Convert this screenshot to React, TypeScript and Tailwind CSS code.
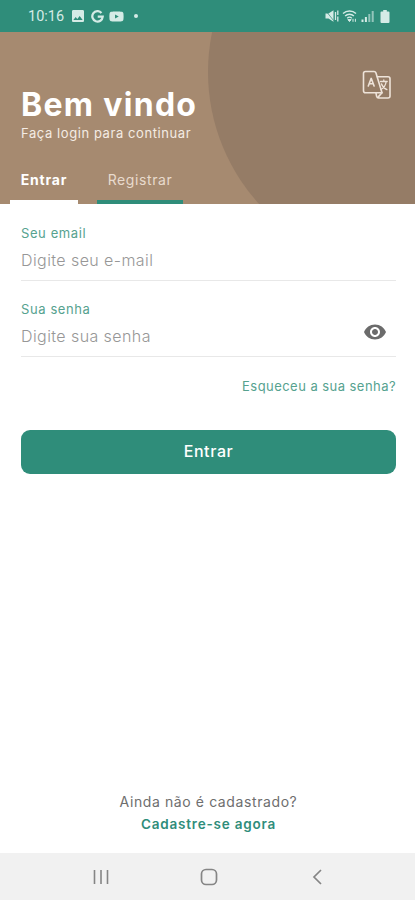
import React, { useState } from 'react';
import { MdImage, MdVisibility } from 'react-icons/md';
import { FaYoutube } from 'react-icons/fa';

const TABS = [
  { id: 'login', label: 'Entrar' },
  { id: 'register', label: 'Registrar' },
];

const StatusBar: React.FC = () => (
  <div className="flex h-8 shrink-0 items-center justify-between bg-[#2f8d7a] pl-7 pr-[25px] text-[#d5ebe6]">
    <div className="flex items-center">
      <span className="w-[42px] whitespace-nowrap pt-[2px] font-['Roboto',sans-serif] text-[14.5px] leading-none">10:16</span>
      <MdImage className="h-4 w-4" />
      <svg viewBox="0 0 24 24" className="ml-[5px] h-[13px] w-[13px]" fill="none" stroke="currentColor" strokeWidth="4.2">
        <path d="M19.3 5.4A9.6 9.6 0 1 0 21.6 12.4H12.4" />
      </svg>
      <FaYoutube className="ml-[5px] h-[15px] w-[15px]" />
      <span className="ml-[10px] h-1 w-1 rounded-full bg-[#d5ebe6]" />
    </div>
    <div className="flex items-center">
      {/* muted speaker with vibration bars */}
      <svg viewBox="0 0 14 14" className="h-[14px] w-[14px]" fill="currentColor">
        <path d="M0.5 4.5h3L8.5 1.2v11.6L3.5 9.5h-3z" />
        <path d="M0.8 1.8l8 10" stroke="#2f8d7a" strokeWidth="0.7" />
        <path d="M10.5 3v8M12.8 1.5v4.5M12.8 7.5v5" fill="none" stroke="currentColor" strokeWidth="1.3" />
      </svg>
      <svg viewBox="0 0 15 14" className="ml-[3px] h-[14px] w-[15px]" fill="none" stroke="currentColor" strokeWidth="1.4">
        <path d="M1 4.6C4.6 1.2 10.4 1.2 14 4.6M3.1 7C5.6 4.6 9.4 4.6 11.9 7M5.2 9.2C6.6 7.9 8.4 7.9 9.8 9.2" />
        <path d="M7.5 12.6L5.9 10.6h3.2zM11 9.8v3M13.4 9.8v3" fill="currentColor" strokeWidth="1" />
      </svg>
      <svg viewBox="0 0 13 13" className="ml-[4px] h-[13px] w-[13px]" fill="currentColor">
        <path d="M0.5 9.5h2V12h-2zM3.9 7h2v5h-2z" />
        <path d="M7.3 4h2v8h-2zM10.7 1h2v11h-2z" opacity="0.6" />
      </svg>
      <svg viewBox="0 0 10 13" className="ml-[6px] h-[13px] w-[10px]" fill="currentColor">
        <path d="M3.2 0h3.6v1.5h1.7q1 0 1 1V12q0 1-1 1h-7q-1 0-1-1V2.5q0-1 1-1h1.7z" />
      </svg>
    </div>
  </div>
);

const TranslateIcon: React.FC<{ className?: string }> = ({ className }) => (
  <svg viewBox="0 0 30 30" className={className} fill="none" stroke="currentColor" strokeWidth="1.6" strokeLinejoin="round" strokeLinecap="round">
    <path d="M3.5 1.5h8.6q1.3 0 1.8 1.3L20 22.8H3.5q-2 0-2-2V3.5q0-2 2-2z" />
    <path d="M15.3 6.8H26q2 0 2 2V26q0 2-2 2H16.6q-1.6 0-2-1.6L14 23M20 22.8L15.6 27.6" />
    <path d="M6.3 16l2.9-7.6L12.1 16M7.3 13.7h3.8" />
    <path d="M18.5 11.5h6.7M21.8 10v1.5M24.2 11.5c-.6 4-2.6 6.7-5.2 8M19.4 13.8c1 2.8 2.9 4.8 5.5 5.9" strokeWidth="1.3" />
  </svg>
);

interface FieldProps {
  label: string;
  placeholder: string;
  type: string;
  children?: React.ReactNode;
}

const Field: React.FC<FieldProps> = ({ label, placeholder, type, children }) => (
  <label className="flex h-[76px] flex-col border-b border-[#e8e8e8] pt-5">
    <span className="text-[13px] leading-4 tracking-[0.6px] text-[#56a28f]">{label}</span>
    <span className="flex h-[38px] items-center">
      <input
        type={type}
        placeholder={placeholder}
        className="min-w-0 flex-1 bg-transparent text-base font-light tracking-[0.42px] text-gray-700 outline-none placeholder:text-[#979797]"
      />
      {children}
    </span>
  </label>
);

const App: React.FC = () => {
  const [activeTab, setActiveTab] = useState('login');
  const [showPassword, setShowPassword] = useState(false);

  return (
    <div className="flex h-[900px] w-[415px] flex-col overflow-hidden bg-white font-['Inter',sans-serif]">
      <StatusBar />

      <header className="relative flex h-[172px] shrink-0 flex-col overflow-hidden bg-[#a68a70] text-white">
        <div className="absolute -top-[156px] left-[208px] h-[392px] w-[392px] rounded-full bg-[#957c66]" />
        <div className="relative flex items-start justify-between pl-[21px] pr-[23px] pt-[55px]">
          <div>
            <h1 className="whitespace-nowrap text-[32px] font-bold leading-9 tracking-[1.3px]">Bem vindo</h1>
            <p className="mt-0.5 whitespace-nowrap text-[13px] leading-4 tracking-[0.58px] text-[#f4ece4]">Faça login para continuar</p>
          </div>
          <button className="-mt-[17px] h-[30px] w-[30px] text-[#eee3d9]">
            <TranslateIcon className="h-[30px] w-[30px]" />
          </button>
        </div>
        <nav className="relative mt-auto flex h-[43px] gap-[19px] pl-[10px]">
          {TABS.map((tab) => (
            <button
              key={tab.id}
              onClick={() => setActiveTab(tab.id)}
              className={`whitespace-nowrap border-b-4 pb-0.5 text-sm ${
                tab.id === 'login' ? 'w-[68px] border-white' : 'w-[86px] border-[#2f8d7a]'
              } ${activeTab === tab.id ? 'font-bold tracking-[0.8px]' : 'tracking-[0.6px] text-[#e8dacd]'}`}
            >
              {tab.label}
            </button>
          ))}
        </nav>
      </header>

      <main className="flex flex-1 flex-col pl-[21px] pr-[19px] pt-px">
        <Field label="Seu email" type="email" placeholder="Digite seu e-mail" />
        <Field label="Sua senha" type={showPassword ? 'text' : 'password'} placeholder="Digite sua senha">
          <button onClick={() => setShowPassword(!showPassword)} className="mb-2 mr-[9px] text-[#6b6b6b]">
            <MdVisibility className="h-6 w-6" />
          </button>
        </Field>

        <a href="#" className="mt-[21px] self-end whitespace-nowrap text-[13px] leading-4 tracking-[0.45px] text-[#56a28f]">
          Esqueceu a sua senha?
        </a>
        <button className="mt-9 h-11 rounded-[9px] bg-[#2f8d7a] pb-0.5 text-base font-medium tracking-[0.6px] text-white">
          Entrar
        </button>

        <div className="mb-[18px] mt-auto text-center">
          <p className="text-sm leading-[22px] tracking-[0.6px] text-[#6e6e6e]">Ainda não é cadastrado?</p>
          <a href="#" className="block text-[13.5px] font-semibold leading-[22px] tracking-[0.8px] text-[#2f8d7a]">
            Cadastre-se agora
          </a>
        </div>
      </main>

      <footer className="flex h-[47px] shrink-0 items-center bg-[#f1f1f1] pl-[92px] text-[#858585]">
        <svg viewBox="0 0 18 18" className="h-[18px] w-[18px]" fill="none" stroke="currentColor" strokeWidth="1.6">
          <path d="M2.5 2v14M9 2v14M15.5 2v14" />
        </svg>
        <svg viewBox="0 0 18 18" className="ml-[90px] h-[18px] w-[18px]" fill="none" stroke="currentColor" strokeWidth="1.7">
          <rect x="1.5" y="1.5" width="15" height="15" rx="4.5" />
        </svg>
        <svg viewBox="0 0 18 18" className="ml-[91px] h-[18px] w-[18px]" fill="none" stroke="currentColor" strokeWidth="1.7">
          <path d="M12 2L5 9l7 7" />
        </svg>
      </footer>
    </div>
  );
};

export default App;
